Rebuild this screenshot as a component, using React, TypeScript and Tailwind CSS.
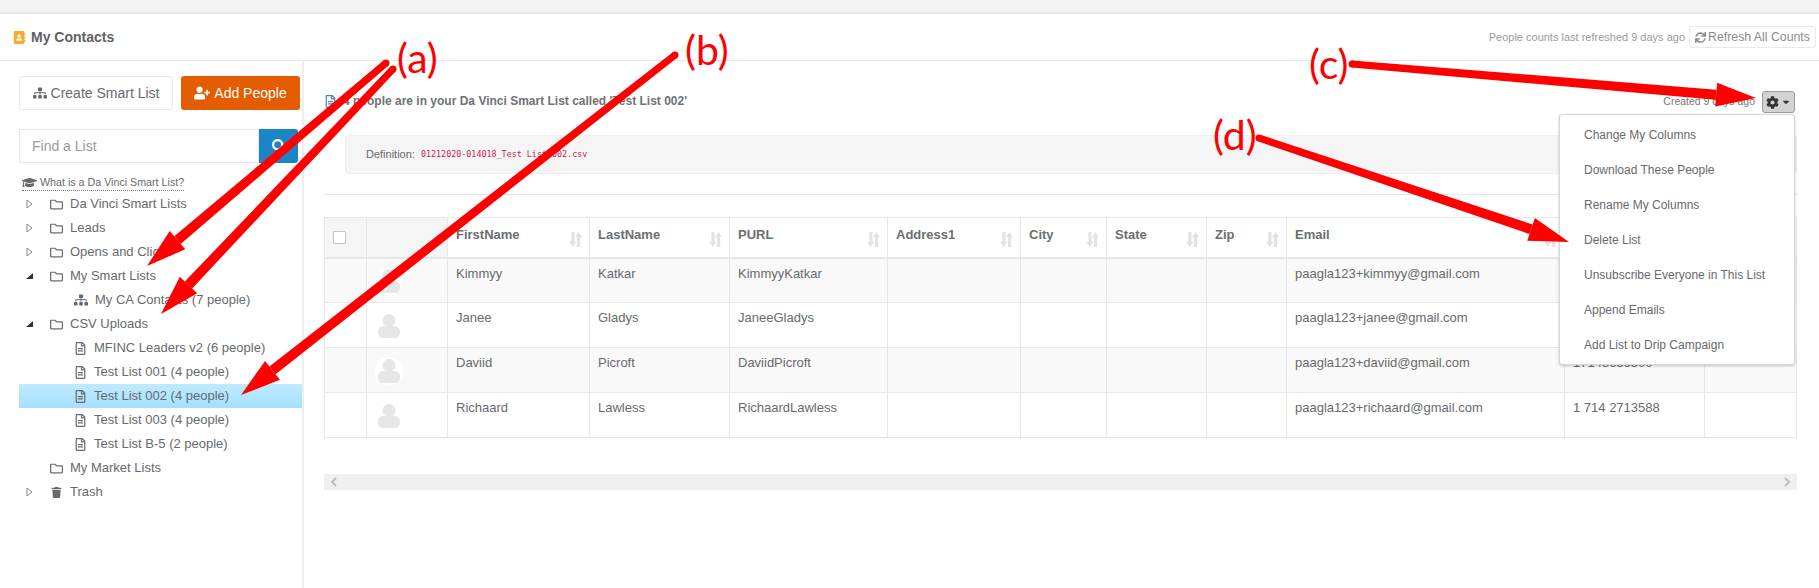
import { FaAddressBook, FaCaretDown, FaCog, FaGraduationCap, FaRegFileAlt, FaRegFolder, FaSearch, FaSitemap, FaSync, FaTrash, FaUserPlus } from "react-icons/fa";

const rows = [
	{ first: "Kimmyy", last: "Katkar", purl: "KimmyyKatkar", email: "paagla123+kimmyy@gmail.com", phone: "" },
	{ first: "Janee", last: "Gladys", purl: "JaneeGladys", email: "paagla123+janee@gmail.com", phone: "" },
	{ first: "Daviid", last: "Picroft", purl: "DaviidPicroft", email: "paagla123+daviid@gmail.com", phone: "17148656500" },
	{ first: "Richaard", last: "Lawless", purl: "RichaardLawless", email: "paagla123+richaard@gmail.com", phone: "1 714 2713588" },
];

const columns = [
	{ label: "FirstName", width: "w-[142px]" },
	{ label: "LastName", width: "w-[140px]" },
	{ label: "PURL", width: "w-[158px]" },
	{ label: "Address1", width: "w-[133px]" },
	{ label: "City", width: "w-[86px]" },
	{ label: "State", width: "w-[100px]" },
	{ label: "Zip", width: "w-[80px]" },
	{ label: "Email", width: "w-[278px]" },
];

const menuItems = [
	"Change My Columns",
	"Download These People",
	"Rename My Columns",
	"Delete List",
	"Unsubscribe Everyone in This List",
	"Append Emails",
	"Add List to Drip Campaign",
];

type TreeRow = {
	label: string;
	depth: number;
	toggle?: "closed" | "open";
	icon: "folder" | "file" | "sitemap" | "trash";
	selected?: boolean;
};

const tree: TreeRow[] = [
	{ label: "Da Vinci Smart Lists", depth: 0, toggle: "closed", icon: "folder" },
	{ label: "Leads", depth: 0, toggle: "closed", icon: "folder" },
	{ label: "Opens and Clicks", depth: 0, toggle: "closed", icon: "folder" },
	{ label: "My Smart Lists", depth: 0, toggle: "open", icon: "folder" },
	{ label: "My CA Contacts (7 people)", depth: 1, icon: "sitemap" },
	{ label: "CSV Uploads", depth: 0, toggle: "open", icon: "folder" },
	{ label: "MFINC Leaders v2 (6 people)", depth: 1, icon: "file" },
	{ label: "Test List 001 (4 people)", depth: 1, icon: "file" },
	{ label: "Test List 002 (4 people)", depth: 1, icon: "file", selected: true },
	{ label: "Test List 003 (4 people)", depth: 1, icon: "file" },
	{ label: "Test List B-5 (2 people)", depth: 1, icon: "file" },
	{ label: "My Market Lists", depth: 0, icon: "folder" },
	{ label: "Trash", depth: 0, toggle: "closed", icon: "trash" },
];

function Toggle({ kind }: { kind?: "closed" | "open" }) {
	if (kind === "closed") {
		return (
			<svg width="7" height="10" viewBox="0 0 7 10" className="shrink-0">
				<path d="M1 1 L6 5 L1 9 Z" fill="#fff" stroke="#8a8a8a" strokeWidth="1" />
			</svg>
		);
	}
	if (kind === "open") {
		return (
			<svg width="7" height="7" viewBox="0 0 7 7" className="shrink-0">
				<path d="M7 0 L7 6 L0 6 Z" fill="#333" />
			</svg>
		);
	}
	return <span className="w-[7px] shrink-0" />;
}

function TreeIcon({ icon }: { icon: TreeRow["icon"] }) {
	if (icon === "folder") return <FaRegFolder size={13} className="shrink-0 text-[#676a6c]" />;
	if (icon === "sitemap") return <FaSitemap size={14} className="shrink-0 text-[#676a6c]" />;
	if (icon === "trash") return <FaTrash size={11} className="ml-[1px] mr-[1px] shrink-0 text-[#676a6c]" />;
	return <FaRegFileAlt size={13} className="shrink-0 text-[#676a6c]" />;
}

function SortIcon() {
	return (
		<svg width="13" height="15" viewBox="0 0 14 14" preserveAspectRatio="none" className="absolute right-[7px] top-[14px] text-[#e3e3e3]">
			<path d="M2.500 0h3.500v9h2l-4 5-4-5h2.500z M8.500 14h3.500V5h2L10.250 0 6.500 5h2z" fill="currentColor" />
		</svg>
	);
}

function Avatar() {
	return (
		<svg width="22" height="24" viewBox="0 0 22 24" className="text-[#e6e6e6]">
			<circle cx="11" cy="6.500" r="6.500" fill="currentColor" />
			<rect x="0" y="12" width="22" height="12" rx="5.500" fill="currentColor" />
		</svg>
	);
}

// shaft gets a bit wider towards the head, same as the hand drawn arrows
function Arrow({ from, to, spread = 12, head = 40 }: { from: [number, number]; to: [number, number]; spread?: number; head?: number }) {
	const dx = to[0] - from[0];
	const dy = to[1] - from[1];
	const len = Math.hypot(dx, dy);
	const ux = dx / len;
	const uy = dy / len;
	const bx = to[0] - ux * head;
	const by = to[1] - uy * head;
	const shaft = `${from[0] - uy * 3.5},${from[1] + ux * 3.5} ${bx - uy * 5},${by + ux * 5} ${bx + uy * 5},${by - ux * 5} ${from[0] + uy * 3.5},${from[1] - ux * 3.5}`;
	const points = `${bx - uy * spread},${by + ux * spread} ${to[0]},${to[1]} ${bx + uy * spread},${by - ux * spread}`;
	return (
		<g fill="#ff0000">
			<circle cx={from[0]} cy={from[1]} r="3.500" />
			<polygon points={shaft} />
			<polygon points={points} />
		</g>
	);
}

function Annotations() {
	return (
		<>
			<svg width="1819" height="588" viewBox="0 0 1819 588" className="pointer-events-none absolute left-0 top-0">
				<Arrow from={[386, 63]} to={[147, 266]} />
				<Arrow from={[393, 69]} to={[161, 314]} />
				<Arrow from={[675, 55]} to={[241, 395]} />
				<Arrow from={[1352, 64]} to={[1756, 98]} />
				<Arrow from={[1259, 138]} to={[1569, 242]} />
			</svg>
			<span className="absolute left-[397px] top-[33px] text-[41px] leading-[50px] text-[#ff0000] [font-family:Lato,sans-serif]">(a)</span>
			<span className="absolute left-[685px] top-[25px] text-[41px] leading-[50px] text-[#ff0000] [font-family:Lato,sans-serif]">(b)</span>
			<span className="absolute left-[1309px] top-[39px] text-[41px] leading-[50px] text-[#ff0000] [font-family:Lato,sans-serif]">(c)</span>
			<span className="absolute left-[1213px] top-[110px] text-[41px] leading-[50px] text-[#ff0000] [font-family:Lato,sans-serif]">(d)</span>
		</>
	);
}

export default function App() {
	return (
		<div className="relative flex h-[588px] w-full flex-col overflow-hidden bg-white text-[13px] text-[#676a6c] [font-family:'Liberation_Sans',Arial,sans-serif]">
			<div className="h-[14px] shrink-0 border-b-2 border-[#e7eaec] bg-[#f3f3f4]" />

			<header className="flex h-[47px] shrink-0 items-center justify-between border-b border-[#e7eaec] pl-[13px] pr-[3px]">
				<h1 className="flex items-center gap-[5px] text-[14px] font-bold text-[#5f6265]">
					<FaAddressBook size={13} className="text-[#f8ac2c]" />
					My Contacts
				</h1>
				<div className="flex items-center gap-[4px]">
					<span className="text-[11px] text-[#9a9a9a]">People counts last refreshed 9 days ago</span>
					<button type="button" className="flex h-[22px] w-[127px] items-center justify-center gap-[2px] rounded-[3px] border border-[#e7eaec] bg-white text-[12.300px] text-[#8a8a8a]">
						<FaSync size={11} />
						Refresh All Counts
					</button>
				</div>
			</header>

			<div className="flex min-h-0 flex-1">
				<aside className="w-[304px] shrink-0 border-r-2 border-[#eeeeee] pl-[19px]">
					<div className="mt-[15px] flex gap-[8px]">
						<button type="button" className="flex h-[34px] w-[154px] items-center justify-center gap-[4px] rounded-[3px] border border-[#e7eaec] bg-white text-[14px] text-[#676a6c]">
							<FaSitemap size={14} />
							Create Smart List
						</button>
						<button type="button" className="flex h-[34px] w-[119px] items-center justify-center gap-[4px] rounded-[3px] bg-[#e35d00] text-[14px] text-white">
							<FaUserPlus size={16} />
							Add People
						</button>
					</div>

					<div className="mt-[19px] flex h-[34px] w-[279px]">
						<div className="flex flex-1 items-center border border-[#e5e6e7] pl-[12px] text-[14px] text-[#9b9b9b]">Find a List</div>
						<div className="flex w-[39px] items-center justify-center rounded-r-[3px] bg-[#1c84c6] text-white">
							<FaSearch size={14} />
						</div>
					</div>

					<a className="ml-[3px] mt-[12px] flex w-fit items-center gap-[3px] border-b border-dotted border-[#777] text-[10.700px] leading-[13px]">
						<FaGraduationCap size={15} />
						What is a Da Vinci Smart List?
					</a>

					<ul className="mt-[1px]">
						{tree.map((row) => (
							<li
								key={row.label}
								className={`flex h-[24px] items-center ${row.selected ? "bg-gradient-to-b from-[#beeaff] to-[#a6e0fd]" : ""}`}
							>
								<span className="ml-[7px] flex w-[24px] shrink-0 items-center">
									<Toggle kind={row.toggle} />
								</span>
								<span className={`flex items-center gap-[7px] ${row.depth === 1 ? "ml-[24px]" : ""}`}>
									<TreeIcon icon={row.icon} />
									<span className="whitespace-nowrap">{row.label}</span>
								</span>
							</li>
						))}
					</ul>
				</aside>

				<main className="relative min-w-0 flex-1 pl-[20px] pr-[22px]">
					<div className="mt-[30px] flex h-[22px] items-center justify-between pr-[2px]">
						<p className="-mt-[2px] flex items-center gap-[6px] text-[12px] font-bold text-[#6f7275]">
							<FaRegFileAlt size={13} className="text-[#4a7fc1]" />
							4 people are in your Da Vinci Smart List called 'Test List 002'
						</p>
						<div className="flex items-center gap-[7px]">
							<span className="text-[10.500px] text-[#777]">Created 9 days ago</span>
							<button type="button" className="flex h-[22px] w-[33px] items-center justify-center gap-[2px] rounded-[3px] border border-[#9a9a9a] bg-[#d2d2d2] text-[#333]">
								<FaCog size={13} />
								<FaCaretDown size={10} />
							</button>
						</div>
					</div>

					<div className="ml-[21px] mt-[22px] flex h-[39px] items-center gap-[6px] rounded-[4px] border border-[#eeeeee] bg-[#f5f5f5] pl-[20px]">
						<span className="text-[11px]">Definition:</span>
						<code className="text-[8.400px] text-[#c7254e] [font-family:'DejaVu_Sans_Mono',monospace]">01212020-014018_Test List 002.csv</code>
					</div>

					<div className="mt-[20px] border-t border-[#e7e7e7]" />

					<table className="mt-[22px] w-[1473px] table-fixed border-collapse">
						<thead>
							<tr className="h-[40px]">
								<th className="w-[42px] border border-b-2 border-[#e7e7e7] bg-[#f5f5f5] pl-[8px] text-left">
									<span className="block h-[13px] w-[13px] rounded-[1px] border border-[#c4c4c4] bg-white" />
								</th>
								<th className="w-[81px] border border-b-2 border-[#e7e7e7] bg-[#f5f5f5]" />
								{columns.map((col) => (
									<th key={col.label} className={`${col.width} relative border border-b-2 border-[#e7e7e7] pb-[5px] pl-[8px] text-left text-[13px] font-bold text-[#6b6e71]`}>
										{col.label}
										<SortIcon />
									</th>
								))}
								<th className="w-[140px] border border-b-2 border-[#e7e7e7]" />
								<th className="border border-b-2 border-[#e7e7e7]" />
							</tr>
						</thead>
						<tbody>
							{rows.map((row, index) => (
								<tr key={row.first} className={`h-[45px] ${index % 2 === 0 ? "bg-[#f9f9f9]" : "bg-white"}`}>
									<td className="border border-[#e7e7e7]" />
									<td className="border border-[#e7e7e7] pl-[8px]">
										<span className={`mt-[2px] flex h-[28px] w-[28px] items-center justify-center rounded-full ${index % 2 === 0 ? "bg-white" : ""}`}>
											<Avatar />
										</span>
									</td>
									<td className="border border-[#e7e7e7] pb-[14px] pl-[8px]">{row.first}</td>
									<td className="border border-[#e7e7e7] pb-[14px] pl-[8px]">{row.last}</td>
									<td className="border border-[#e7e7e7] pb-[14px] pl-[8px]">{row.purl}</td>
									<td className="border border-[#e7e7e7]" />
									<td className="border border-[#e7e7e7]" />
									<td className="border border-[#e7e7e7]" />
									<td className="border border-[#e7e7e7]" />
									<td className="border border-[#e7e7e7] pb-[14px] pl-[8px]">{row.email}</td>
									<td className="border border-[#e7e7e7] pb-[14px] pl-[8px]">{row.phone}</td>
									<td className="border border-[#e7e7e7]" />
								</tr>
							))}
						</tbody>
					</table>

					<div className="mt-[36px] flex h-[16px] w-[1473px] items-center justify-between bg-[#efefef] px-[6px] text-[#bdbdbd]">
						<svg width="7" height="10" viewBox="0 0 7 10"><path d="M6 1 L2 5 L6 9" fill="none" stroke="currentColor" strokeWidth="2" /></svg>
						<svg width="7" height="10" viewBox="0 0 7 10"><path d="M1 1 L5 5 L1 9" fill="none" stroke="currentColor" strokeWidth="2" /></svg>
					</div>

					<div className="absolute left-[1255px] top-[53px] w-[236px] rounded-[3px] border border-[#d5d5dc] bg-white py-[2px] shadow-[0_1px_3px_rgba(0,0,0,0.2)]">
						{menuItems.map((item) => (
							<div key={item} className="flex h-[35px] items-center pl-[24px] text-[12px] text-[#676a6c]">
								{item}
							</div>
						))}
					</div>
				</main>
			</div>

			<Annotations />
		</div>
	);
}
